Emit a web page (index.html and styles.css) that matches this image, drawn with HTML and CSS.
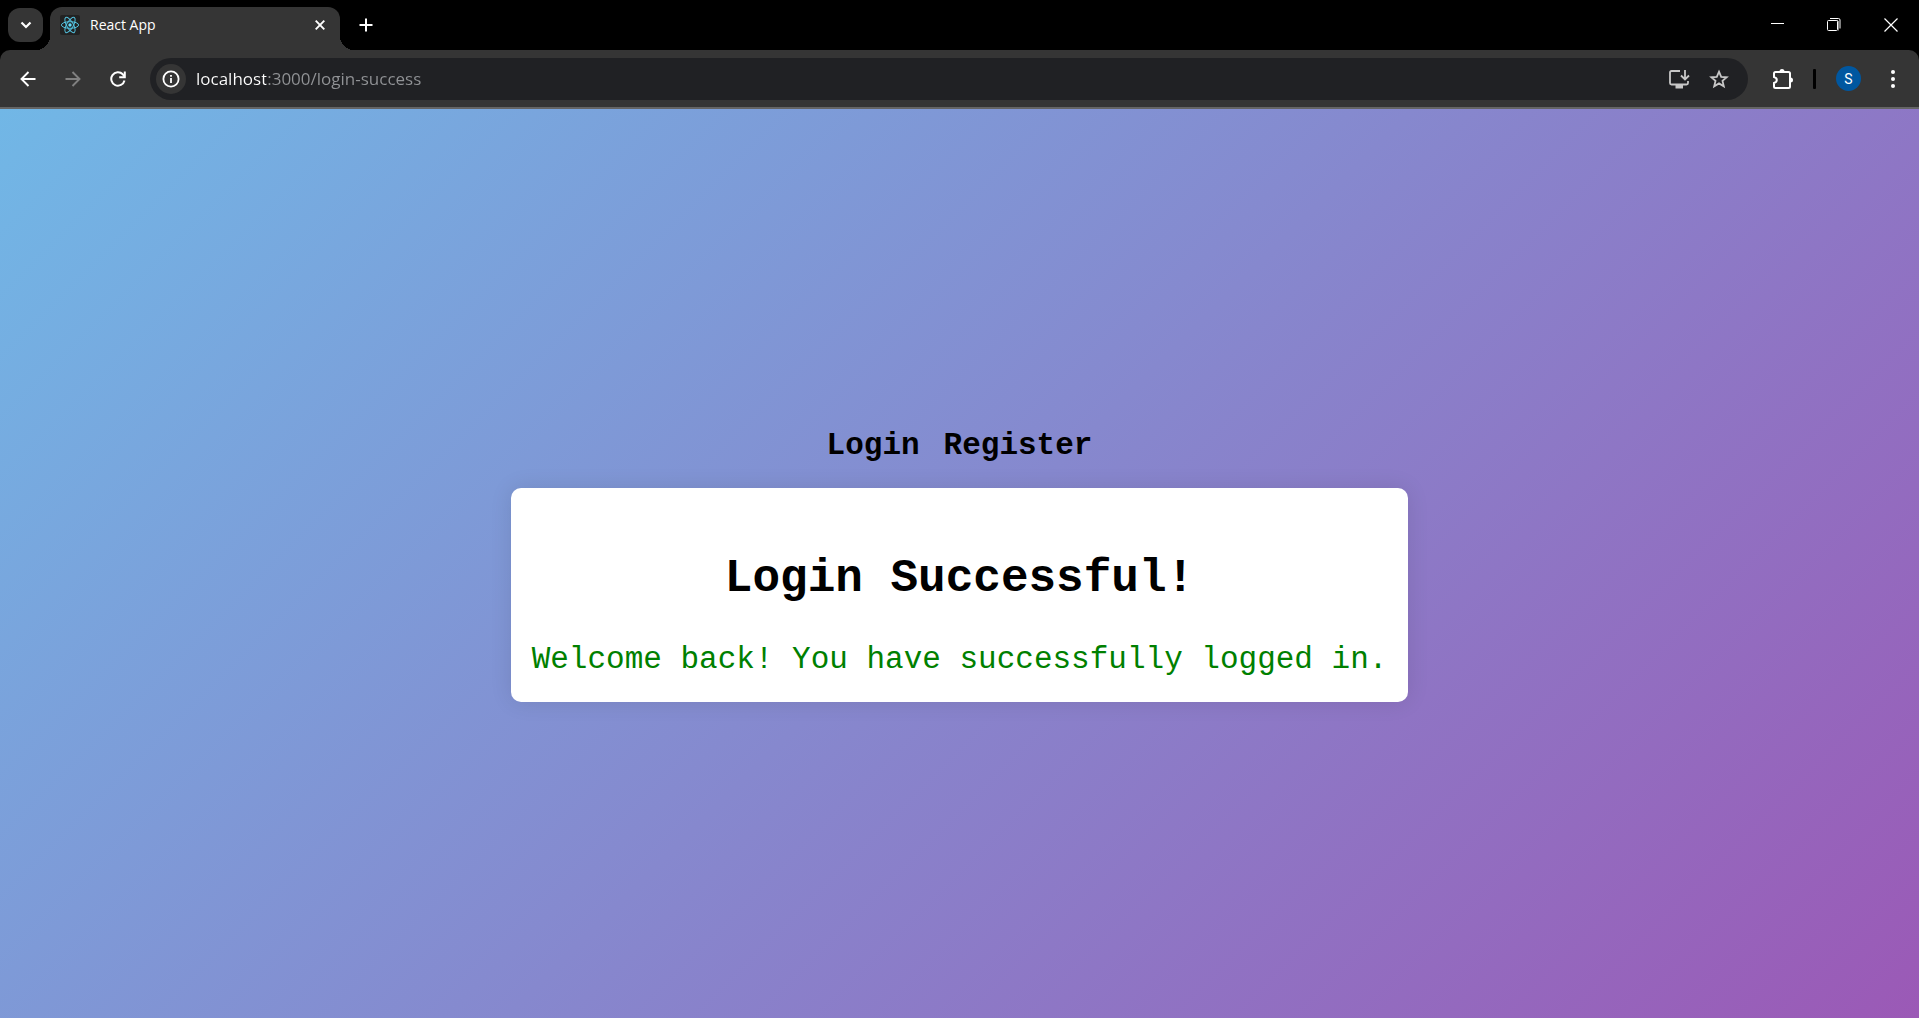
FILE: index.html
```html
<!DOCTYPE html>
<html lang="en">
<head>
<meta charset="utf-8">
<meta name="viewport" content="width=device-width, initial-scale=1">
<title>React App</title>
<link rel="stylesheet" href="styles.css">
</head>
<body>
<header class="browser">
  <div class="tab-strip">
    <button class="tab-search" type="button" aria-label="Search tabs">
      <svg width="12" height="8" viewBox="0 0 12 8"><path d="M1.500 1.500 6 6l4.500-4.500" fill="none" stroke="#fff" stroke-width="2.200"/></svg>
    </button>
    <div class="tab">
      <svg class="favicon" width="20" height="20" viewBox="0 0 20 20">
        <rect width="20" height="20" rx="2" fill="#222"/>
        <g fill="none" stroke="#53c1de" stroke-width="1">
          <ellipse cx="10" cy="10" rx="8.600" ry="3.300"/>
          <ellipse cx="10" cy="10" rx="8.600" ry="3.300" transform="rotate(60 10 10)"/>
          <ellipse cx="10" cy="10" rx="8.600" ry="3.300" transform="rotate(120 10 10)"/>
        </g>
        <circle cx="10" cy="10" r="1.700" fill="#61dafb"/>
      </svg>
      <span class="tab-title">React App</span>
      <button class="icon-button tab-close" type="button" aria-label="Close tab">
        <svg width="10" height="10" viewBox="0 0 10 10"><path d="M.7.7l8.600 8.600M9.300.7.7 9.300" stroke="#fff" stroke-width="1.900"/></svg>
      </button>
    </div>
    <button class="icon-button new-tab" type="button" aria-label="New tab">
      <svg width="14" height="14" viewBox="0 0 14 14"><path d="M7 .5v13M.5 7h13" stroke="#fff" stroke-width="2"/></svg>
    </button>
    <div class="window-controls">
      <button class="window-button" type="button" aria-label="Minimize">
        <svg width="14" height="14" viewBox="0 0 14 14"><path d="M1 5.500h13" stroke="#fff"/></svg>
      </button>
      <button class="window-button" type="button" aria-label="Restore">
        <svg width="14" height="14" viewBox="0 0 14 14" fill="none"><path d="M11.500 3v9.500M2 2.500h9" stroke="#888"/><rect x=".5" y="2.500" width="10" height="10" rx="1" stroke="#fff"/><path d="M3 .5h8.500q1.500 0 1.500 1.500v8.500" stroke="#fff"/></svg>
      </button>
      <button class="window-button" type="button" aria-label="Close">
        <svg width="14" height="14" viewBox="0 0 14 14"><path d="M.5.5l13 13M13.500.5l-13 13" stroke="#fff" stroke-width="1.200"/></svg>
      </button>
    </div>
  </div>
  <div class="toolbar">
    <div class="history">
      <button class="icon-button" type="button" aria-label="Back">
        <svg width="16" height="16" viewBox="0 0 16 16"><path d="M15.500 8H2M8.500 1 1.500 8l7 7" fill="none" stroke="#fff" stroke-width="1.900"/></svg>
      </button>
      <button class="icon-button" type="button" aria-label="Forward" disabled>
        <svg width="16" height="16" viewBox="0 0 16 16"><path d="M.5 8H14M7.500 1l7 7-7 7" fill="none" stroke="#808080" stroke-width="1.900"/></svg>
      </button>
      <button class="icon-button" type="button" aria-label="Reload">
        <svg width="16" height="16" viewBox="0 0 16 16"><path d="M14.500 9.500A6.700 6.700 0 1 1 12.800 3.300L14.500 5.500" fill="none" stroke="#fff" stroke-width="2"/><path d="M14.800.5v5.800H9.200" fill="none" stroke="#fff" stroke-width="2"/></svg>
      </button>
    </div>
    <form class="address-bar">
      <button class="site-info" type="button" aria-label="View site information">
        <svg width="18" height="18" viewBox="0 0 18 18"><circle cx="9" cy="9" r="7.600" fill="none" stroke="#fff" stroke-width="1.800"/><path d="M9 8v5M9 5v1.800" stroke="#fff" stroke-width="1.800"/></svg>
      </button>
      <input class="address" type="text" aria-label="Address" value="localhost:3000/login-success" spellcheck="false">
      <button class="icon-button" type="button" aria-label="Install app">
        <svg width="22" height="20" viewBox="0 0 22 20" fill="none" stroke="#c7c7c7" stroke-width="1.800"><path d="M12 2H3.500Q2 2 2 3.500v10.500Q2 15.500 3.500 15.500h15q1.500 0 1.500-1.500V12"/><path d="M17 1v9M13 6.500l4 4 4-4"/><path d="M7.500 15.500h7.500v4H7.500z" fill="#c7c7c7" stroke="none"/></svg>
      </button>
      <button class="icon-button" type="button" aria-label="Bookmark this tab">
        <svg width="20" height="20" viewBox="0 0 20 20"><path d="M10 2.700l2.200 5.100 5.500.5-4.200 3.600 1.300 5.400-4.800-2.900-4.800 2.900 1.300-5.400-4.200-3.600 5.500-.5z" fill="none" stroke="#c7c7c7" stroke-width="1.800"/></svg>
      </button>
    </form>
    <button class="icon-button extensions" type="button" aria-label="Extensions">
      <svg width="22" height="22" viewBox="0 0 22 22"><path d="M3.500 4h13Q18 4 18 5.500v13q0 1.500-1.500 1.500h-13Q2 20 2 18.500V15q2.800-.8 2.800-3T2 9V5.500Q2 4 3.500 4z" fill="none" stroke="#fff" stroke-width="2"/><path d="M7.500 3.500a2.500 2.500 0 0 1 5 0zM18.500 9.500a2.500 2.500 0 0 1 0 5z" fill="#fff"/></svg>
    </button>
    <span class="divider"></span>
    <button class="avatar" type="button" aria-label="Profile">S</button>
    <button class="icon-button" type="button" aria-label="Menu">
      <svg width="6" height="20" viewBox="0 0 6 20" fill="#fff"><circle cx="3" cy="3" r="2"/><circle cx="3" cy="10" r="2"/><circle cx="3" cy="17" r="2"/></svg>
    </button>
  </div>
</header>
<main class="page">
  <nav class="links">
    <a href="#login">Login</a>
    <a href="#register">Register</a>
  </nav>
  <section class="card">
    <h1 class="card-title">Login Successful!</h1>
    <p class="card-message">Welcome back! You have successfully logged in.</p>
  </section>
</main>
</body>
</html>
```
FILE: styles.css
```css
* {
  box-sizing: border-box;
}

body {
  margin: 0;
  min-height: 100vh;
  display: flex;
  flex-direction: column;
  font-family: "Liberation Mono", "Courier New", monospace;
  color: #000;
}

svg {
  display: block;
}

button {
  display: flex;
  align-items: center;
  justify-content: center;
  padding: 0;
  border: 0;
  background: none;
  color: #fff;
}

/* Browser chrome */
.browser {
  background: #000;
  border-bottom: 2px solid #656565;
  font-family: "Open Sans", "Segoe UI", sans-serif;
}

.tab-strip {
  display: flex;
  align-items: center;
  height: 50px;
  padding-left: 8px;
}

.tab-search {
  width: 35px;
  height: 34px;
  border-radius: 12px;
  background: #353535;
}

.tab {
  position: relative;
  display: flex;
  align-items: center;
  align-self: flex-end;
  width: 290px;
  height: 43px;
  margin-left: 7px;
  padding: 0 10px 8px;
  border-radius: 12px 12px 0 0;
  background: #353535;
}

.tab::before,
.tab::after {
  content: "";
  position: absolute;
  bottom: 0;
  width: 14px;
  height: 14px;
}

.tab::before {
  right: 100%;
  background: radial-gradient(circle at 0 0, transparent 14px, #353535 14px);
}

.tab::after {
  left: 100%;
  background: radial-gradient(circle at 100% 0, transparent 14px, #353535 14px);
}

.tab-title {
  flex: 1;
  margin-left: 10px;
  font-size: 14px;
  line-height: 20px;
  color: #fff;
}

.icon-button {
  width: 30px;
  height: 30px;
  flex: none;
}

.tab-close {
  margin-right: -5px;
}

.new-tab {
  margin-left: 11px;
}

.window-controls {
  display: flex;
  margin-left: auto;
}

.window-button {
  width: 57px;
  height: 50px;
}

.toolbar {
  display: flex;
  align-items: center;
  height: 57px;
  padding: 0 11px 0 13px;
  border-radius: 10px 10px 0 0;
  background: #353535;
}

.history {
  display: flex;
  gap: 15px;
}

.address-bar {
  flex: 1;
  display: flex;
  align-items: center;
  gap: 10px;
  height: 42px;
  margin: 0 20px 0 17px;
  padding: 0 14px 0 6px;
  border-radius: 21px;
  background: #202124;
}

.site-info {
  flex: none;
  width: 30px;
  height: 30px;
  border-radius: 50%;
  background: #353535;
}

/* The host is white and the rest of the address is dimmed. */
.address {
  flex: 1;
  min-width: 0;
  padding: 0;
  border: 0;
  outline: 0;
  font: 17px/24px "Open Sans", "Segoe UI", sans-serif;
  color: transparent;
  background: linear-gradient(90deg, #fff 70px, #919396 70px);
  background-clip: text;
  -webkit-background-clip: text;
}

.divider {
  width: 3px;
  height: 20px;
  margin: 0 20px 0 15px;
  border-radius: 1px;
  background: #000;
}

.avatar {
  width: 25px;
  height: 25px;
  margin-right: 17px;
  border-radius: 50%;
  background: #0057a0;
  font: 400 14px/16px Roboto, sans-serif;
}

/* Page content */
.page {
  flex: 1;
  display: flex;
  flex-direction: column;
  align-items: center;
  justify-content: center;
  background: linear-gradient(135deg, #71b7e6, #9b59b6);
}

.links {
  display: flex;
  gap: 24px;
  margin-bottom: 21px;
  font-size: 31px;
  font-weight: bold;
  line-height: 42px;
}

.links a {
  color: #000;
  text-decoration: none;
}

.card {
  padding: 24px 21px;
  border-radius: 10px;
  background: #fff;
  box-shadow: 0 0 22px rgba(0, 0, 0, 0.1);
  text-align: center;
}

.card-title {
  margin: 41px 0 37px;
  font-size: 46px;
  line-height: 52px;
}

.card-message {
  margin: 0;
  font-size: 31px;
  line-height: 36px;
  color: #008000;
}
```
